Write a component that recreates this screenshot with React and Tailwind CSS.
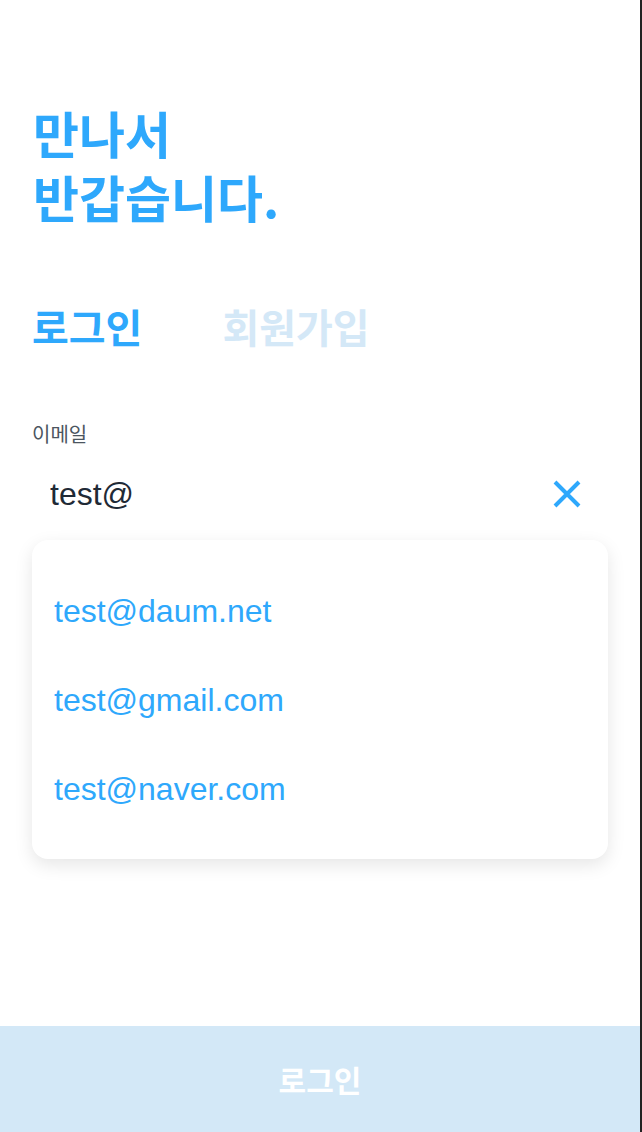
import { useState } from 'react';

const KR = { fontFamily: '"Noto Sans CJK KR", "Noto Sans", sans-serif' };
const LATIN = { fontFamily: '"Liberation Sans", "Noto Sans CJK KR", sans-serif' };

function App() {
  const [email, setEmail] = useState('test@');
  const [tab, setTab] = useState('login');
  const domains = ['daum.net', 'gmail.com', 'naver.com'];

  return (
    <div className="w-[642px] h-[1132px] bg-[#222] flex">
      <div className="w-[640px] h-full bg-white flex flex-col" style={KR}>
        {/* Greeting */}
        <div className="px-[33px] pt-[100px]">
          <h1 className="text-[50px] leading-[64px] font-bold text-[#2ea8fc]">
            만나서
            <br />
            반갑습니다.
          </h1>
        </div>

        {/* Tabs */}
        <div className="flex gap-[80px] px-[32px] mt-[70px]">
          <button
            onClick={() => setTab('login')}
            className={`text-[40px] leading-[56px] font-bold ${tab === 'login' ? 'text-[#2ea8fc]' : 'text-[#d4e8f7]'}`}
          >
            로그인
          </button>
          <button
            onClick={() => setTab('signup')}
            className={`text-[40px] leading-[56px] font-bold ${tab === 'signup' ? 'text-[#2ea8fc]' : 'text-[#d4e8f7]'}`}
          >
            회원가입
          </button>
        </div>

        {/* Email field */}
        <div className="px-[32px] mt-[66px]">
          <label className="block text-[20px] leading-[28px] text-[#4b5560]">이메일</label>
          <div className="flex items-center justify-between h-[70px] pl-[18px] pr-[26px] mt-[11px]">
            <input
              value={email}
              onChange={(e) => setEmail(e.target.value)}
              className="flex-1 bg-transparent outline-none text-[32px] text-[#1f2a36]"
              style={LATIN}
            />
            <button onClick={() => setEmail('')} className="text-[#2ea8fc]">
              <svg width="30" height="30" viewBox="0 0 30 30" fill="none" stroke="currentColor" strokeWidth="4">
                <path d="M3 3 L27 27 M27 3 L3 27" />
              </svg>
            </button>
          </div>

          {/* Suggestions */}
          <ul className="mt-[11px] bg-white rounded-[16px] shadow-[0_6px_18px_rgba(0,0,0,0.10)] py-[26px]">
            {domains.map((d) => (
              <li
                key={d}
                className="h-[89px] flex items-center px-[22px] text-[32px] text-[#2ea8fc]"
                style={LATIN}
              >
                test@{d}
              </li>
            ))}
          </ul>
        </div>

        <div className="flex-1" />

        {/* Submit */}
        <button className="h-[106px] bg-[#d3e8f7] text-white text-[30px] font-bold">
          로그인
        </button>
      </div>
    </div>
  );
}

export default App;
